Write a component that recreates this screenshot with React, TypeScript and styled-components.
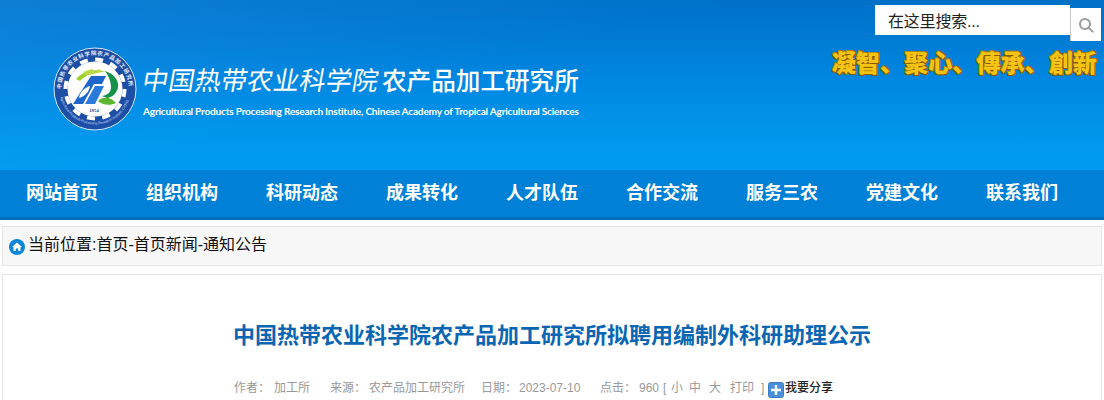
import styled, { createGlobalStyle } from 'styled-components'

const sans = `"Liberation Sans", "Noto Sans CJK SC", sans-serif`

const GlobalStyle = createGlobalStyle`
  html, body {
    margin: 0;
    padding: 0;
    background: #fff;
    overflow: hidden;
    font-family: ${sans};
  }
`

const Page = styled.div`
  width: 1104px;
  height: 400px;
  overflow: hidden;
`

const Header = styled.header`
  position: relative;
  height: 170px;
  box-sizing: border-box;
  padding: 47px 0 0 53px;
  background:
    linear-gradient(165deg, rgba(40,150,235,0.35) 0%, rgba(40,150,235,0) 42%),
    linear-gradient(180deg, #0070c8 0%, #0086e0 45%, #0099ef 85%, #009cf1 100%);
`

const Brand = styled.div`
  display: flex;
  gap: 6px;
  align-items: flex-start;
`

const BrandText = styled.div`
  display: flex;
  flex-direction: column;
  padding-top: 14px;
  color: #fff;
`

const BrandTitle = styled.div`
  display: flex;
  align-items: center;
  height: 36px;
`

const ScriptName = styled.span`
  font-family: "Noto Sans CJK SC", sans-serif;
  font-weight: 400;
  font-size: 26px;
  letter-spacing: 0.2px;
  width: 240px;
  line-height: 36px;
  white-space: nowrap;
  transform: skewX(-10deg);
`

const UnitName = styled.span`
  font-family: "Noto Sans CJK SC", sans-serif;
  font-weight: 500;
  font-size: 24.6px;
  line-height: 36px;
  white-space: nowrap;
  margin-left: -1px;
`

const EnglishName = styled.div`
  font-family: Lato, sans-serif;
  font-weight: 700;
  font-size: 10.2px;
  line-height: 14px;
  margin-top: 7px;
  letter-spacing: -0.26px;
  white-space: nowrap;
`

const SearchBar = styled.div`
  position: absolute;
  top: 5px;
  left: 875px;
  display: flex;
  align-items: flex-start;
`

const SearchInput = styled.div`
  width: 195px;
  height: 30px;
  box-sizing: border-box;
  padding-left: 13px;
  background: #fff;
  color: #222;
  font-size: 16px;
  line-height: 33px;
  letter-spacing: -0.2px;
`

const SearchButton = styled.div`
  width: 31px;
  height: 33px;
  margin-top: 3px;
  box-sizing: border-box;
  border-left: 1px solid #c8c8c8;
  background: #fff;
  display: flex;
  align-items: center;
  justify-content: center;
`

const Slogan = styled.div`
  position: absolute;
  top: 46px;
  left: 832px;
  font-family: "Noto Sans CJK SC", sans-serif;
  font-weight: 900;
  font-size: 24px;
  line-height: 32px;
  letter-spacing: 0.1px;
  white-space: nowrap;
  color: #f5c412;
  text-shadow: 1px 1px 0 #8a5a00, -1px -1px 0 #b98a10, 1px -1px 0 #8a5a00, -1px 1px 0 #8a5a00;
`

const Nav = styled.nav`
  display: flex;
  height: 50px;
  box-sizing: border-box;
  padding-left: 2px;
  background: #0080d6;
  border-bottom: 3px solid #006fc0;
`

const NavItem = styled.a`
  width: 120px;
  text-align: center;
  color: #fff;
  font-weight: 700;
  font-size: 18px;
  line-height: 46px;
`

const Breadcrumb = styled.div`
  display: flex;
  align-items: center;
  gap: 3px;
  margin: 6px 2px 0;
  height: 40px;
  box-sizing: border-box;
  padding-left: 6px;
  background: #f7f7f7;
  border: 1px solid #e4e4e4;
  color: #111;
  font-size: 16px;
`

const HomeIcon = styled.svg`
  margin-top: 2px;
`

const CrumbText = styled.span`
  margin-bottom: 6px;
`

const Article = styled.section`
  margin: 8px 2px 0;
  height: 200px;
  box-sizing: border-box;
  border: 1px solid #e4e4e4;
  padding-top: 43px;
`

const Title = styled.h1`
  margin: 0;
  text-align: center;
  color: #0a66b2;
  font-size: 22px;
  font-weight: 700;
  line-height: 35px;
`

const Meta = styled.div`
  display: flex;
  align-items: center;
  margin-top: 23px;
  padding-left: 231px;
  color: #999;
  font-size: 12px;
  line-height: 24px;
  white-space: nowrap;
`

const MetaItem = styled.span<{ $w: number }>`
  width: ${p => p.$w}px;
  flex: none;
`

const Share = styled.span`
  display: flex;
  align-items: center;
  gap: 1px;
  color: #222;
  font-size: 12px;
  font-weight: 500;
`

const ShareIcon = styled.svg`
  margin-top: 3px;
`

const Emblem = () => (
  <svg width="84" height="84" viewBox="0 0 84 84">
    <defs>
      <path id="ringTop" d="M8 42a34 34 0 0 1 68 0" />
      <path id="ringBottom" d="M6.500 42a35.500 35.500 0 0 0 71 0" />
    </defs>
    <circle cx="42" cy="42" r="41" fill="#1c4ea6" stroke="#d6e6fa" strokeWidth="1" />
    <circle cx="42" cy="42" r="29.500" fill="none" stroke="#fff" strokeWidth="4" strokeDasharray="8 7.440" />
    <circle cx="42" cy="42" r="27.500" fill="#fff" />
    <text fontSize="5.400" fontWeight="700" fill="#e6eeff">
      <textPath href="#ringTop" textLength="104">中国热带农业科学院农产品加工研究所</textPath>
    </text>
    <text fontSize="3.600" fill="#c4d6f5">
      <textPath href="#ringBottom" startOffset="8" textLength="92">Agricultural Products Processing Research Institute, CATAS</textPath>
    </text>
    <path d="M23 32c7-8 19-11 31-7-10-1-20 2-27 9z" fill="#9fce32" />
    <path d="M30 25l9-3 3 3 4-3 3 3-9 2-7 1z" fill="#b8da42" />
    <path d="M52 24c9 3 14 9 13 16-1 6-5 10-11 11l-5-2c6-1 9-4 9-9 0-6-3-12-6-16z" fill="#17914a" />
    <path d="M38 29h15l-4 8H41l-11 20h-10z" fill="#1f66cc" />
    <path d="M42 39h9l-9 18h-10z" fill="#2a7adc" />
    <path d="M26 51c1-6 5-10 11-12-1 6-5 10-11 12z" fill="#fff" />
    <path d="M45 54c5-5 13-4 18 2-6 3-14 2-18-2z" fill="#5cb62f" />
    <text x="41" y="64.500" fontSize="4.800" fontWeight="700" fill="#1c3f86" textAnchor="middle" fontFamily="Liberation Serif, serif">1954</text>
  </svg>
)

const navItems = ['网站首页', '组织机构', '科研动态', '成果转化', '人才队伍', '合作交流', '服务三农', '党建文化', '联系我们']

export default function App() {
  return (
    <Page>
      <GlobalStyle />
      <Header>
        <Brand>
          <Emblem />
          <BrandText>
            <BrandTitle>
              <ScriptName>中国热带农业科学院</ScriptName>
              <UnitName>农产品加工研究所</UnitName>
            </BrandTitle>
            <EnglishName>Agricultural Products Processing Research Institute, Chinese Academy of Tropical Agricultural Sciences</EnglishName>
          </BrandText>
        </Brand>
        <SearchBar>
          <SearchInput>在这里搜索...</SearchInput>
          <SearchButton>
            <svg width="16" height="16" viewBox="0 0 16 16" fill="none" stroke="#9a9a9a" strokeWidth="2">
              <circle cx="7" cy="7" r="5" />
              <path d="M10.600 10.600L14.600 14.600" strokeLinecap="round" />
            </svg>
          </SearchButton>
        </SearchBar>
        <Slogan>凝智、聚心、傳承、創新</Slogan>
      </Header>
      <Nav>
        {navItems.map(item => <NavItem key={item}>{item}</NavItem>)}
      </Nav>
      <Breadcrumb>
        <HomeIcon width="16" height="16" viewBox="0 0 16 16">
          <circle cx="8" cy="8" r="8" fill="#0a86d8" />
          <path d="M8 3.400L13 8h-1.500v4H9.200V9.600H6.800V12H4.500V8H3z" fill="#fff" />
        </HomeIcon>
        <CrumbText>当前位置:首页-首页新闻-通知公告</CrumbText>
      </Breadcrumb>
      <Article>
        <Title>中国热带农业科学院农产品加工研究所拟聘用编制外科研助理公示</Title>
        <Meta>
          <MetaItem $w={40}>作者：</MetaItem>
          <MetaItem $w={56}>加工所</MetaItem>
          <MetaItem $w={39}>来源：</MetaItem>
          <MetaItem $w={112}>农产品加工研究所</MetaItem>
          <MetaItem $w={38}>日期：</MetaItem>
          <MetaItem $w={81}>2023-07-10</MetaItem>
          <MetaItem $w={39}>点击：</MetaItem>
          <MetaItem $w={24}>960</MetaItem>
          <MetaItem $w={8}>[</MetaItem>
          <MetaItem $w={18}>小</MetaItem>
          <MetaItem $w={20}>中</MetaItem>
          <MetaItem $w={21}>大</MetaItem>
          <MetaItem $w={31}>打印</MetaItem>
          <MetaItem $w={7}>]</MetaItem>
          <Share>
            <ShareIcon width="16" height="16" viewBox="0 0 16 16">
              <rect x="0.500" y="0.500" width="15" height="15" rx="2" fill="#4a90d9" stroke="#3a7cc4" />
              <path d="M8 3v10M3 8h10" stroke="#fff" strokeWidth="2.400" />
            </ShareIcon>
            我要分享
          </Share>
        </Meta>
      </Article>
    </Page>
  )
}
